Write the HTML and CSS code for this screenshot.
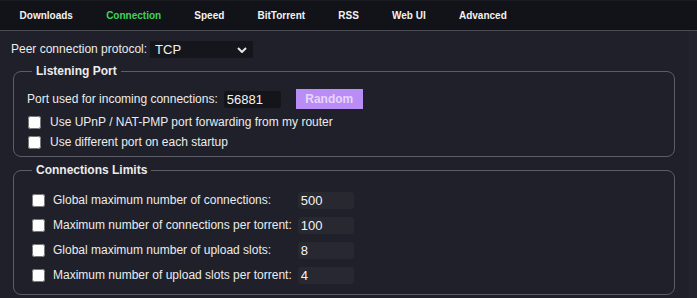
FILE: index.html
```html
<!DOCTYPE html>
<html lang="en">
<head>
    <meta charset="UTF-8">
    <title>Options - Connection</title>
    <link rel="stylesheet" href="styles.css">
</head>
<body>
<ul class="tabs">
    <li><a href="javascript:;">Downloads</a></li>
    <li class="current"><a href="javascript:;">Connection</a></li>
    <li><a href="javascript:;">Speed</a></li>
    <li><a href="javascript:;">BitTorrent</a></li>
    <li><a href="javascript:;">RSS</a></li>
    <li><a href="javascript:;">Web UI</a></li>
    <li><a href="javascript:;">Advanced</a></li>
</ul>
<div class="page">
    <div class="content">
        <div class="protocol">
            <label for="protocol">Peer connection protocol:</label>
            <span class="select-wrap">
                <select id="protocol" class="select">
                    <option>TCP</option>
                    <option>uTP</option>
                    <option>TCP and uTP</option>
                </select>
                <svg class="chevron" width="10" height="6" viewBox="0 0 10 6"><polyline points="1,1 5,5 9,1" fill="none" stroke="#e8e8e8" stroke-width="2"/></svg>
            </span>
        </div>

        <fieldset class="group listen">
            <legend>Listening Port</legend>
            <div class="port-row">
                <label for="port">Port used for incoming connections:</label>
                <input type="text" id="port" class="field dark" value="56881">
                <button class="random">Random</button>
            </div>
            <div class="check-row first">
                <input type="checkbox" id="upnp">
                <label for="upnp">Use UPnP / NAT-PMP port forwarding from my router</label>
            </div>
            <div class="check-row">
                <input type="checkbox" id="randport">
                <label for="randport">Use different port on each startup</label>
            </div>
        </fieldset>

        <fieldset class="group">
            <legend>Connections Limits</legend>
            <div class="limits">
                <input type="checkbox" id="maxconn">
                <label for="maxconn">Global maximum number of connections:</label>
                <input type="text" class="field" value="500">

                <input type="checkbox" id="maxconnper">
                <label for="maxconnper">Maximum number of connections per torrent:</label>
                <input type="text" class="field" value="100">

                <input type="checkbox" id="maxup">
                <label for="maxup">Global maximum number of upload slots:</label>
                <input type="text" class="field" value="8">

                <input type="checkbox" id="maxupper">
                <label for="maxupper">Maximum number of upload slots per torrent:</label>
                <input type="text" class="field" value="4">
            </div>
        </fieldset>
    </div>
    <div class="track"></div>
</div>
</body>
</html>
```

FILE: styles.css
```css
/* reset */
body,ul,li,fieldset,legend{margin:0;padding:0}
body{font:12px/1.2 "Liberation Sans", Arial, sans-serif;color:#ececec;background:#1f2029;}
ul{list-style:none}
a{text-decoration:none}
input,select,button{font-family:"Liberation Sans", Arial, sans-serif;outline:none;}

/* tab bar */
.tabs {
    display: flex;
    height: 31px;
    padding-left: 3px;
    background: #121318;
    border-top: 1px solid #1a1b21;
    border-bottom: 1px solid #4a4b53;
    box-sizing: border-box;
}
.tabs li {
    display: flex;
    align-items: center;
}
.tabs a {
    padding: 0 16.6px;
    font-size: 10px;
    font-weight: bold;
    color: #f2f2f2;
}
.tabs .current a {
    color: #3dd45a;
}

.page {
    display: flex;
    height: 267px;
}
.content {
    flex: 1;
    padding: 10px 12px 0 11px;
}
.track {
    width: 8px;
    background: #23242c;
}

/* protocol select */
.protocol {
    display: flex;
    align-items: center;
    gap: 3px;
    height: 17px;
}
.select-wrap {
    position: relative;
    display: block;
}
.select {
    appearance: none;
    width: 103px;
    height: 17px;
    padding: 0 0 0 5px;
    border: 0;
    background: #15161c;
    color: #f2f2f2;
    font-size: 13px;
}
.chevron {
    position: absolute;
    right: 6px;
    top: 6px;
    pointer-events: none;
}

/* groups */
.group {
    margin: 6px 2px 0;
    padding: 11px 13px 6px;
    border: 1px solid #5c5d66;
    border-radius: 8px;
}
.group.listen {
    padding-bottom: 4px;
}
.group legend {
    margin-left: 5px;
    padding: 0 4px;
    font-weight: bold;
    line-height: 14px;
}

.port-row {
    display: flex;
    align-items: center;
    height: 20px;
}
.field {
    width: 56px;
    height: 17px;
    padding: 0 0 0 3px;
    box-sizing: border-box;
    border: 0;
    border-radius: 3px;
    background: #272830;
    color: #f4f4f4;
    font-size: 13px;
}
.port-row .field {
    margin-left: 6px;
    width: 57px;
}
.field.dark {
    background: #14151b;
}
.random {
    margin-left: 15px;
    width: 67px;
    height: 20px;
    border: 0;
    background: #ba8cf5;
    color: #e4d7fb;
    font-size: 12px;
    font-weight: bold;
}

.check-row {
    display: flex;
    align-items: center;
    height: 20px;
}
.check-row.first {
    margin-top: 3px;
}
.check-row input {
    margin: 0 9px 0 1px;
    width: 13px;
    height: 13px;
}

.limits {
    display: grid;
    grid-template-columns: 26px auto 56px;
    grid-auto-rows: 25px;
    align-items: center;
    justify-content: start;
}
.limits input[type="checkbox"] {
    margin: 0 0 0 5px;
    width: 13px;
    height: 13px;
}
.limits label {
    padding-right: 6px;
}
```
